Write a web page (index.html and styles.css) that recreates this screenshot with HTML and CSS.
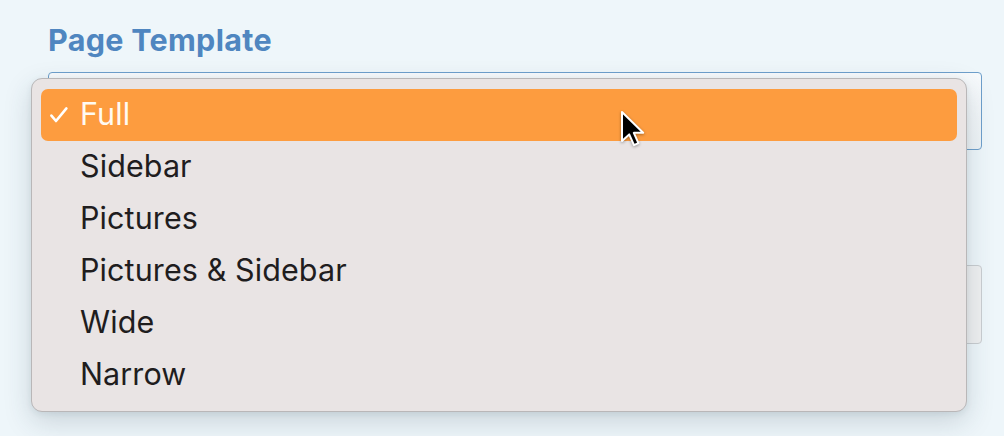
FILE: index.html
```html
<!DOCTYPE html>
<html>
<head>
<meta charset="utf-8">
<link rel="stylesheet" href="styles.css">
</head>
<body>
<div class="page">
  <div class="label">Page Template</div>
  <div class="select"></div>
  <div class="gap"></div>
  <div class="box"></div>
</div>
<div class="menu">
  <div class="item active">
    <svg class="check" width="20" height="18" viewBox="0 0 20 18"><path d="M2.4 9.6 L7 15 L17.4 2.4" fill="none" stroke="#fff" stroke-width="2.6" stroke-linecap="round" stroke-linejoin="round"/></svg>
    <span>Full</span>
  </div>
  <div class="item"><span>Sidebar</span></div>
  <div class="item"><span>Pictures</span></div>
  <div class="item"><span>Pictures &amp; Sidebar</span></div>
  <div class="item"><span>Wide</span></div>
  <div class="item"><span>Narrow</span></div>
</div>
<svg class="cursor" width="26" height="38" viewBox="0 0 13 19">
  <path d="M1 1 L1 15.5 L4.6 12.2 L7 17.6 L9.2 16.6 L6.9 11.4 L11.6 11.4 Z" fill="#000" stroke="#fff" stroke-width="1" stroke-linejoin="round"/>
</svg>
</body>
</html>
```
FILE: styles.css
```css
html, body {
  margin: 0;
  padding: 0;
}
body {
  width: 1004px;
  height: 436px;
  overflow: hidden;
  background: #eef6fa;
  font-family: Inter, "Noto Sans", "Liberation Sans", sans-serif;
  position: relative;
}
.page {
  padding: 24px 22px 0 48px;
  display: flex;
  flex-direction: column;
}
.label {
  font-weight: 700;
  font-size: 30.5px;
  line-height: 32px;
  color: #4f86c0;
  letter-spacing: 0.3px;
}
.select {
  margin-top: 16px;
  height: 76px;
  border: 1px solid #6e9fcb;
  border-radius: 4px;
  background: linear-gradient(#f7fafc, #eef3f6);
}
.gap {
  height: 115px;
}
.box {
  height: 77px;
  border: 1px solid #c9cdd0;
  border-radius: 4px;
  background: #eff0f1;
}
.menu {
  position: absolute;
  left: 31px;
  top: 78px;
  width: 916px;
  padding: 10px 9px 10px 9px;
  background: #e9e4e4;
  border: 1px solid #b9b7b8;
  border-radius: 11px;
  box-shadow: 0 10px 28px rgba(40, 60, 80, 0.18), 0 2px 6px rgba(40, 60, 80, 0.08);
  display: flex;
  flex-direction: column;
}
.item {
  height: 52px;
  box-sizing: border-box;
  padding-bottom: 4px;
  display: flex;
  align-items: center;
  padding-left: 39px;
  position: relative;
  font-size: 30.5px;
  color: #1f1d1e;
  border-radius: 7px;
}
.item span {
  letter-spacing: 0.1px;
}
.item.active {
  background: #fd9c3f;
  color: #fffaf2;
}
.check {
  position: absolute;
  left: 8px;
  top: 17px;
}
.cursor {
  position: absolute;
  left: 620px;
  top: 110px;
  filter: drop-shadow(0 1px 1.5px rgba(0,0,0,0.35));
}
```
